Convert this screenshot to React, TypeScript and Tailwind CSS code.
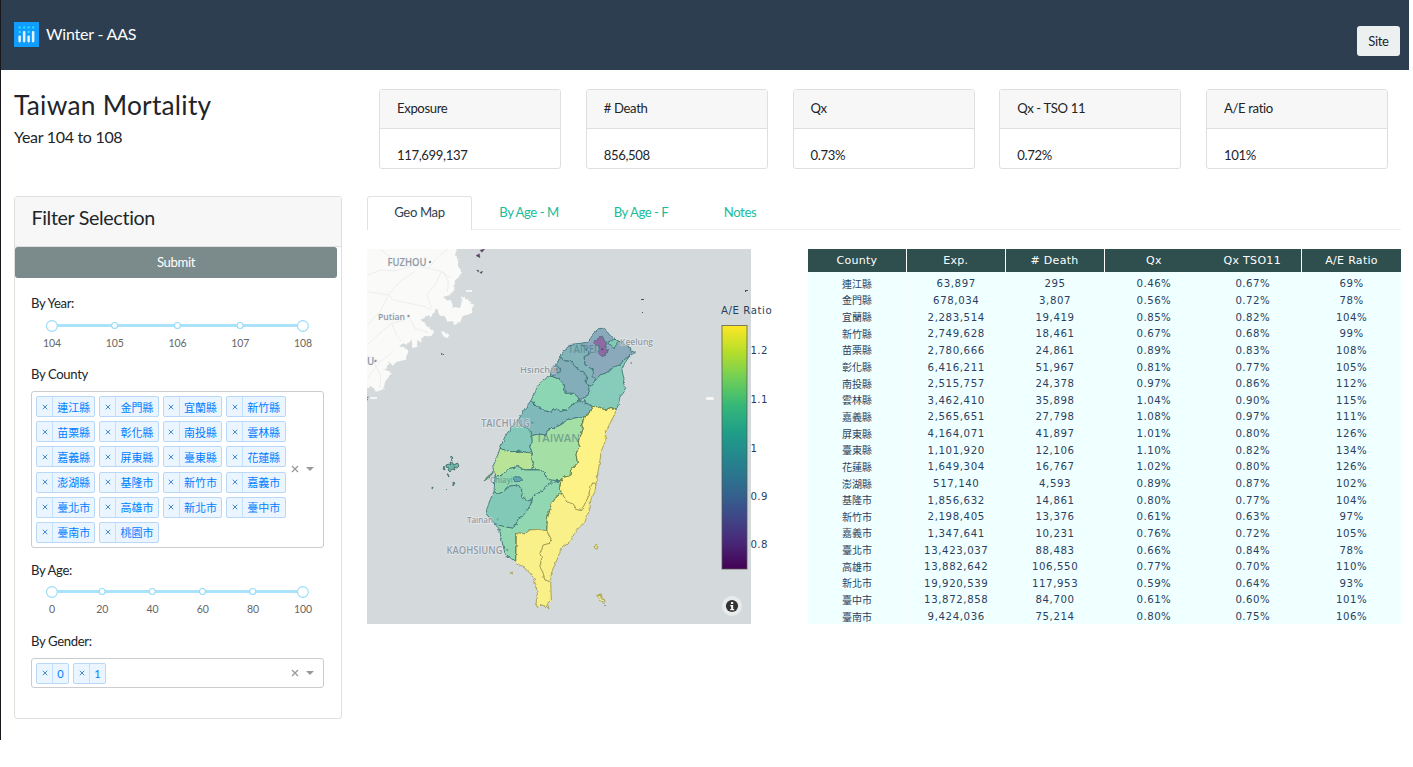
import React from "react";

const rows: string[][] = [
  ["連江縣", "63,897", "295", "0.46%", "0.67%", "69%"],
  ["金門縣", "678,034", "3,807", "0.56%", "0.72%", "78%"],
  ["宜蘭縣", "2,283,514", "19,419", "0.85%", "0.82%", "104%"],
  ["新竹縣", "2,749,628", "18,461", "0.67%", "0.68%", "99%"],
  ["苗栗縣", "2,780,666", "24,861", "0.89%", "0.83%", "108%"],
  ["彰化縣", "6,416,211", "51,967", "0.81%", "0.77%", "105%"],
  ["南投縣", "2,515,757", "24,378", "0.97%", "0.86%", "112%"],
  ["雲林縣", "3,462,410", "35,898", "1.04%", "0.90%", "115%"],
  ["嘉義縣", "2,565,651", "27,798", "1.08%", "0.97%", "111%"],
  ["屏東縣", "4,164,071", "41,897", "1.01%", "0.80%", "126%"],
  ["臺東縣", "1,101,920", "12,106", "1.10%", "0.82%", "134%"],
  ["花蓮縣", "1,649,304", "16,767", "1.02%", "0.80%", "126%"],
  ["澎湖縣", "517,140", "4,593", "0.89%", "0.87%", "102%"],
  ["基隆市", "1,856,632", "14,861", "0.80%", "0.77%", "104%"],
  ["新竹市", "2,198,405", "13,376", "0.61%", "0.63%", "97%"],
  ["嘉義市", "1,347,641", "10,231", "0.76%", "0.72%", "105%"],
  ["臺北市", "13,423,037", "88,483", "0.66%", "0.84%", "78%"],
  ["高雄市", "13,882,642", "106,550", "0.77%", "0.70%", "110%"],
  ["新北市", "19,920,539", "117,953", "0.59%", "0.64%", "93%"],
  ["臺中市", "13,872,858", "84,700", "0.61%", "0.60%", "101%"],
  ["臺南市", "9,424,036", "75,214", "0.80%", "0.75%", "106%"],
];

const headers = ["County", "Exp.", "# Death", "Qx", "Qx TSO11", "A/E Ratio"];

const counties = [
  "連江縣", "金門縣", "宜蘭縣", "新竹縣", "苗栗縣", "彰化縣", "南投縣", "雲林縣",
  "嘉義縣", "屏東縣", "臺東縣", "花蓮縣", "澎湖縣", "基隆市", "新竹市", "嘉義市",
  "臺北市", "高雄市", "新北市", "臺中市", "臺南市", "桃園市",
];

const stats = [
  ["Exposure", "117,699,137"],
  ["# Death", "856,508"],
  ["Qx", "0.73%"],
  ["Qx - TSO 11", "0.72%"],
  ["A/E ratio", "101%"],
];

function Logo() {
  return (
    <svg width="25" height="25" viewBox="0 0 25 25">
      <rect width="25" height="25" fill="#119dff" />
      <g fill="#e4f4ff">
        <rect x="4.4" y="13.4" width="2.5" height="7" rx="1.1" />
        <rect x="8.9" y="9" width="2.5" height="11.4" rx="1.1" />
        <rect x="13.4" y="13.4" width="2.5" height="7" rx="1.1" />
        <rect x="17.9" y="9" width="2.5" height="11.4" rx="1.1" />
      </g>
      <g fill="#25e0fd">
        <circle cx="5.7" cy="5.4" r="1.2" />
        <circle cx="10.2" cy="5.4" r="1.2" />
        <circle cx="14.7" cy="5.4" r="1.2" />
        <circle cx="19.2" cy="5.4" r="1.2" />
        <circle cx="5.7" cy="9.9" r="1.2" />
        <circle cx="14.7" cy="9.9" r="1.2" />
      </g>
    </svg>
  );
}

function Cross({ size }: { size: number }) {
  return (
    <svg width={size} height={size} viewBox="0 0 8 8" stroke="currentColor" strokeWidth="1.3">
      <path d="M1 1 L7 7 M7 1 L1 7" />
    </svg>
  );
}

function Tag({ label }: { label: string }) {
  return (
    <div className="flex h-[21px] rounded-[2px] border border-[#b9d8f8] bg-[#ebf5ff] text-[#007eff]">
      <span className="flex w-4 items-center justify-center border-r border-[#c2e0ff] text-[#3c86d2]">
        <Cross size={6} />
      </span>
      <span className="flex flex-1 items-center justify-center pt-px text-[11px] leading-none tracking-normal">{label}</span>
    </div>
  );
}

function SelectControls() {
  return (
    <div className="flex items-center gap-[7px] pb-px text-[#999]">
      <Cross size={8} />
      <svg width="8" height="4" viewBox="0 0 8 4" fill="#999">
        <path d="M0 0H8L4 4Z" />
      </svg>
    </div>
  );
}

function RangeSlider({ marks }: { marks: string[] }) {
  const step = 251 / (marks.length - 1);
  return (
    <svg width="292" height="36" viewBox="0 0 292 36" className="block">
      <rect x="21" y="6" width="251" height="3" fill="#abe2fb" />
      {marks.map((m, i) => {
        const end = i === 0 || i === marks.length - 1;
        const x = 20.9 + i * step;
        return (
          <g key={m}>
            <circle cx={x} cy={end ? 8 : 7.5} r={end ? 5.4 : 3} fill="#fff" stroke="#96dbfa" strokeWidth="1.1" />
            <text x={x + 0.2} y="29" fontSize="10.5" fill="#666" textAnchor="middle" letterSpacing="-0.1">
              {m}
            </text>
          </g>
        );
      })}
    </svg>
  );
}

const mainland =
  "M22 12H290L285 30L298 50L292 62L303 75L297 95L285 108L283 135L270 150L250 155L258 168L272 165L280 185L300 190L305 170L302 160L315 155L325 165L332 175L344 180L335 190L338 205L322 205L305 220L300 232L285 240L280 228L262 230L255 213L240 212L228 190L222 205L213 220L205 212L190 215L182 225L200 240L208 250L222 258L215 272L190 275L180 290L168 282L172 305L158 310L155 285L140 300L130 290L118 305L130 305L145 320L135 345L110 350L100 362L85 350L80 370L72 372L95 385L75 410L70 432L50 440L35 425L22 430Z";

const regions: { d: string; fill: string }[] = [
  { fill: "#8aaabb", d: "M330 100L350 97L362 85L372 68L385 56L400 55L412 66L425 82L440 92L455 96L462 105L475 108L480 122L496 127L480 137L462 150L450 165L430 172L420 182L405 190L390 195L380 208L372 208L365 198L370 180L345 165L342 140L357 132L352 120L345 112Z" },
  { fill: "#8f6ba2", d: "M370 98L380 88L397 78L402 90L410 100L408 118L418 122L405 128L405 138L395 139L385 125L388 110L375 105Z" },
  { fill: "#83ccb2", d: "M413 98L425 92L435 88L447 94L440 103L432 115L422 108Z" },
  { fill: "#83b4ba", d: "M330 100L305 103L285 118L270 140L283 152L302 155L310 165L325 178L340 185L350 200L347 210L358 232L368 222L377 210L365 198L370 180L345 165L342 140L357 132L352 120L345 112Z" },
  { fill: "#82adb9", d: "M270 140L262 160L250 172L240 197L255 203L270 210L283 225L285 250L310 250L325 262L328 271L345 268L355 250L358 232L347 210L350 200L340 185L325 178L310 165L302 155L283 152Z" },
  { fill: "#79a8b6", d: "M250 168L262 168L273 180L270 190L258 187L250 198L240 197L246 185Z" },
  { fill: "#87ccba", d: "M480 137L465 158L455 180L462 205L460 220L467 232L460 250L450 260L445 285L438 297L425 293L405 300L385 290L368 290L360 283L345 278L342 268L355 250L358 232L377 210L390 195L405 190L420 182L430 172L450 165L462 150Z" },
  { fill: "#8dd6b4", d: "M240 197L215 215L200 235L183 272L200 290L225 303L245 307L248 297L262 296L270 305L290 300L300 290L325 275L325 262L310 250L285 250L283 225L270 210L255 203Z" },
  { fill: "#80b9ba", d: "M183 272L165 295L145 330L160 350L175 355L185 377L205 372L228 375L232 362L260 350L285 335L310 325L345 318L362 305L368 290L345 278L328 271L300 290L290 300L270 305L262 296L248 297L245 307L225 303L200 290Z" },
  { fill: "#83c8b8", d: "M145 330L125 350L105 380L90 415L120 425L155 424L187 430L180 410L187 395L185 377L175 355L160 350Z" },
  { fill: "#a4dfa5", d: "M185 377L205 372L228 375L232 362L260 350L285 335L310 325L345 318L335 345L340 355L325 395L330 410L318 430L322 460L302 480L300 497L280 502L270 515L240 510L228 505L225 485L205 480L185 478L190 460L182 445L187 430L180 410L187 395Z" },
  { fill: "#b9e497", d: "M90 415L80 445L68 470L75 500L95 495L120 475L145 470L165 480L185 478L190 460L182 445L187 430L155 424L120 425Z" },
  { fill: "#92d6b0", d: "M75 500L72 545L85 552L100 545L120 528L145 525L155 540L155 560L175 572L187 570L190 558L215 545L240 520L270 512L240 510L228 505L225 485L205 480L165 480L145 470L120 475L95 495Z" },
  { fill: "#65a5af", d: "M128 505L135 500L150 501L155 507L149 515L137 515Z" },
  { fill: "#83c9b7", d: "M72 545L60 570L47 610L60 625L78 645L105 650L130 655L145 630L165 610L180 590L187 570L175 572L155 560L155 540L145 525L120 528L100 545L85 552Z" },
  { fill: "#91d7b1", d: "M78 645L90 665L95 690L105 730L137 757L140 700L140 668L165 672L180 660L205 658L230 662L232 625L245 580L262 558L277 550L268 540L272 512L240 520L215 545L190 558L187 570L180 590L165 610L145 630L130 655L105 650Z" },
  { fill: "#f9f08a", d: "M140 668L137 757L165 775L185 795L197 820L203 855L198 880L202 892L215 885L230 890L237 897L232 880L244 870L242 815L225 810L220 790L210 770L215 745L210 730L220 705L240 700L243 685L235 675L230 662L205 658L180 660L165 672Z" },
  { fill: "#f9f08a", d: "M277 550L262 558L245 580L232 625L230 662L243 685L240 700L220 705L210 730L215 745L210 770L220 790L225 810L242 815L245 785L265 740L275 715L305 690L315 665L345 635L360 595L362 570L375 545L378 522L368 518L360 535L355 560L340 590L335 602L320 598L310 582L290 575Z" },
  { fill: "#fcf286", d: "M368 290L385 290L405 300L425 293L441 300L425 330L405 370L410 385L395 420L385 480L378 522L368 518L360 535L355 560L340 590L335 602L320 598L310 582L290 575L277 550L268 540L272 515L280 502L300 497L302 480L322 460L318 430L330 410L325 395L340 355L335 345L345 318L362 305Z" },
];

const ticks: [string, number][] = [["1.2", 350], ["1.1", 398.5], ["1", 447.5], ["0.9", 496], ["0.8", 544]];

function GeoMap() {
  return (
    <svg width="420" height="375" viewBox="367 249 420 375" className="block shrink-0">
      <defs>
        <linearGradient id="scale" x1="0" y1="0" x2="0" y2="1">
          <stop offset="0" stopColor="#fde725" />
          <stop offset="0.11" stopColor="#b5de2b" />
          <stop offset="0.22" stopColor="#6ece58" />
          <stop offset="0.33" stopColor="#35b779" />
          <stop offset="0.44" stopColor="#1f9e89" />
          <stop offset="0.56" stopColor="#26828e" />
          <stop offset="0.67" stopColor="#31688e" />
          <stop offset="0.78" stopColor="#3e4989" />
          <stop offset="0.89" stopColor="#482878" />
          <stop offset="1" stopColor="#440154" />
        </linearGradient>
        <filter id="coast" x="-5%" y="-5%" width="110%" height="110%">
          <feTurbulence type="fractalNoise" baseFrequency="0.08" numOctaves="2" seed="4" />
          <feDisplacementMap in="SourceGraphic" scale="10" xChannelSelector="R" yChannelSelector="G" />
        </filter>
        <clipPath id="frame">
          <rect x="367" y="249" width="384" height="375" />
        </clipPath>
      </defs>
      <g clipPath="url(#frame)">
        <rect x="367" y="249" width="384" height="375" fill="#d4dadc" />
        <g transform="translate(360 245) scale(.33333)">
          <g filter="url(#coast)">
            <path d={"M0 -10H290V12H22V430H0Z" + mainland} fill="#fafaf8" />
            <path d="M243 262L252 258L268 270L262 280L250 274Z" fill="#fafaf8" />
          </g>
          <path d="M22 92L60 75L105 78L160 62L205 70L245 80L270 98M105 78L95 40L60 12M205 70L230 40L262 12M22 140L85 150L120 110L165 80M85 150L100 165L195 185L215 195M85 150L60 200L22 240M215 190L200 150L225 120L245 80M135 225L95 235L65 260L22 300M95 235L110 270L125 290M22 400L60 350L100 320M40 350L62 390L60 430M250 80L265 110L262 140M22 330L60 350M150 220L165 250L205 262" fill="none" stroke="#e9ebec" strokeWidth="2.5" />
          <path d="M348 32L358 26L360 38ZM360 16L374 12L366 22ZM350 76L356 76L356 82ZM360 82L368 79L364 86Z" fill="#5b4168" stroke="#463651" strokeWidth="1" />
          <path d="M243 325h4v4h-4ZM249 327h3v3h-3ZM22 455h3v4h-3ZM22 462h2v4h-2Z" fill="#4c5561" />
        </g>
        <g transform="translate(470 310) scale(.33333)">
          <g filter="url(#coast)" strokeWidth="2.6" strokeLinejoin="round">
            {regions.map((r, i) => (
              <path key={i} d={r.d} fill={r.fill} stroke={i > 15 ? "#a09a4d" : "#3d7476"} />
            ))}
            <path d="M42 513L52 500L68 487L66 494L50 508Z" fill="#73a37f" stroke="#4c7a62" />
            <path d="M137 668L137 757M230 662L232 625L245 580L262 558L277 550L268 540L272 515L280 502L300 497L302 480L322 460L318 430L330 410L325 395L340 355L335 345L345 318L362 305L368 290L385 290L405 300L425 293L441 300" fill="none" stroke="#5f7d46" />
            <path d="M372 710L380 706L384 714L378 718ZM120 790L127 786L126 794ZM380 855L394 852L397 866L405 870L400 877L388 868Z" fill="#f5eb82" stroke="#9b9446" />
            <path d="M108 741l5 -3l3 5l-5 3Z" fill="#83c9b7" stroke="#3d7476" />
          </g>
          <path d="M403 885h4v2h-4ZM482 157h3v4h-3ZM516 6h3v3h-3Z" fill="#566270" />
          <circle cx="397" cy="118" r="3.5" fill="#5b4c74" />
          <circle cx="187" cy="338" r="3.5" fill="#6098a0" />
          <circle cx="83" cy="628" r="3.5" fill="#6eafa2" />
          <circle cx="112" cy="720" r="3.5" fill="#69a78b" />
          <circle cx="258" cy="178" r="4" fill="#55798a" />
        </g>
        <g fill="#6fb6a6" stroke="#31565b" strokeWidth=".7">
          <path d="M450 457l2 -.5l1 1.5l-2 2l1.500 1M446 465l3 -1l2 1l-1 -3l3 1l.5 2l4 -2l1.500 3l-2 2l-3 -1l1 3l-3 -1l-2 3l-2 -2l1 -2l-3 -1ZM444 466l-1 3l2 1ZM447 474l2 3l-1 -3ZM453 482l2 1l-2 3ZM433 487l-1.500 1l1 .8ZM446 489l1 1" />
        </g>
        <path d="M641 299h3v1h-3ZM745 290h3v1h-2v1h-1ZM642 312h1v1h-1Z" fill="#3e5661" />
        <rect x="706" y="397" width="8" height="3" rx="1.5" fill="#f6f7f5" />
        <path d="M466 290h6v2h-6ZM370 397h7v2h-7Z" fill="#f3f5f4" />
        <g
          fontFamily="'Open Sans', 'Noto Sans', sans-serif"
          fontWeight="600"
          fill="#8f9aa6"
          stroke="#f1f3f4"
          strokeWidth="1.4"
          paintOrder="stroke"
          strokeOpacity=".6"
          letterSpacing="0"
        >
          <text x="387.5" y="266" fontSize="9.8" textLength="39" lengthAdjust="spacingAndGlyphs">FUZHOU</text>
          <text x="378" y="319.5" fontSize="9" textLength="27" lengthAdjust="spacingAndGlyphs">Putian</text>
          <text x="367" y="364.5" fontSize="9.8">U</text>
          <text x="446.5" y="553.7" fontSize="9.8" textLength="56" lengthAdjust="spacingAndGlyphs">KAOHSIUNG</text>
          <text x="481" y="426.5" fontSize="9.8" textLength="49" lengthAdjust="spacingAndGlyphs">TAICHUNG</text>
          <text x="520" y="372.5" fontSize="9" textLength="36" lengthAdjust="spacingAndGlyphs">Hsinchu</text>
          <text x="620" y="345.3" fontSize="9" textLength="33" lengthAdjust="spacingAndGlyphs">Keelung</text>
          <text x="467" y="522.7" fontSize="9" textLength="26" lengthAdjust="spacingAndGlyphs">Tainan</text>
        </g>
        <g fontFamily="'Open Sans', 'Noto Sans', sans-serif" fontWeight="600" fill="#45717e" fillOpacity=".55" letterSpacing="0">
          <text x="568" y="353.2" fontSize="10" textLength="29" lengthAdjust="spacingAndGlyphs">TAIPEI</text>
          <text x="490" y="482.5" fontSize="9" textLength="23" lengthAdjust="spacingAndGlyphs">Chiayi</text>
          <text x="536" y="442.3" fontSize="11.5" textLength="44" lengthAdjust="spacingAndGlyphs">TAIWAN</text>
        </g>
        <g fill="#8a949f">
          <circle cx="430" cy="262" r="1.2" />
          <circle cx="408.5" cy="316" r="1.2" />
          <circle cx="375.5" cy="361" r="1.2" />
        </g>
        <circle cx="732" cy="606" r="10" fill="#e8ebec" />
        <circle cx="732" cy="606" r="6.1" fill="#333" />
        <path d="M731 602h2.2v2h-2.2ZM730.2 605h3v4h1v1.2h-4v-1.2h.9v-2.8h-.9Z" fill="#f4f4f4" />
      </g>
      <rect x="722" y="325.5" width="25" height="243.5" fill="url(#scale)" stroke="#555" strokeOpacity=".75" strokeWidth="1" />
      <g fontFamily="'DejaVu Sans', Verdana, sans-serif" fontSize="10.2" fill="#2a3f5f" letterSpacing="0.35">
        <text x="721" y="314" textLength="51">A/E Ratio</text>
        {ticks.map(([t, y]) => (
          <text key={t} x="750.5" y={y + 4}>
            {t}
          </text>
        ))}
      </g>
    </svg>
  );
}

function DataTable() {
  return (
    <div className="ml-[21px] w-[593px] shrink-0 font-['DejaVu_Sans','Noto_Sans_CJK_TC',sans-serif] tracking-normal">
      <div className="grid h-[23px] grid-cols-6 bg-[#2f4f4f] text-[11px] text-white">
        {headers.map((h, i) => (
          <div
            key={h}
            className={
              i === 3 || i === 5
                ? "flex items-center justify-center tracking-[0.3px]"
                : "flex items-center justify-center border-r border-white tracking-[0.3px]"
            }
          >
            {h}
          </div>
        ))}
      </div>
      <div className="h-[352px] overflow-hidden bg-[#f0ffff] pt-[4px] text-[10.2px] leading-[16px] text-[#2a3f5f]">
        {rows.map((r) => (
          <div key={r[0]} className="grid h-[16.65px] grid-cols-6">
            {r.map((c, i) => (
              <div
                key={i}
                className={
                  i === 0
                    ? "flex h-[16.65px] items-center justify-center border-r border-[#fafffe] pt-px text-[10px]"
                    : i < 3
                      ? "flex h-[16.65px] items-center justify-center tracking-[0.6px]"
                      : "flex h-[16.65px] items-center justify-center tracking-[0.45px]"
                }
              >
                {c}
              </div>
            ))}
          </div>
        ))}
      </div>
    </div>
  );
}

export default function App() {
  return (
    <div className="h-[767px] w-[1413px] overflow-hidden bg-white font-[Lato,'Noto_Sans_CJK_TC',sans-serif] text-[13.1px] leading-[20px] tracking-[-0.35px] text-[#212529]">
      <div className="h-[740px] w-[1409px] border-l border-[#16181d]">
        <header className="flex h-[70px] items-start justify-between bg-[#2c3e50] pl-[13px] pr-[9px]">
          <div className="flex items-start gap-[7px] pt-[22px]">
            <Logo />
            <span className="pt-[2px] text-[16px] tracking-[-0.2px] text-white">Winter - AAS</span>
          </div>
          <button className="mt-[26px] h-[30px] w-[43px] rounded-[3px] bg-[#ecf0f1] text-[13.1px]">Site</button>
        </header>

        <div className="flex h-[126px] pl-[13px] pt-[19px]">
          <div className="w-[365px]">
            <h1 className="text-[26.3px] leading-[32px] tracking-[0.25px]">Taiwan Mortality</h1>
            <p className="pt-[6px] text-[16px] leading-[20px] tracking-[-0.3px]">Year 104 to 108</p>
          </div>
          <div className="flex gap-[24.75px]">
            {stats.map(([k, v]) => (
              <div key={k} className="h-[80px] w-[182px] rounded-[3px] border border-[#dfdfdf]">
                <div className="flex h-[39px] items-center border-b border-[#dfdfdf] bg-[#f7f7f7] pb-[2px] pl-[17px]">{k}</div>
                <div className="pl-[17px] pt-[16px]">{v}</div>
              </div>
            ))}
          </div>
        </div>

        <div className="flex pl-[13px]">
          <section className="h-[523px] w-[328px] shrink-0 rounded-[3px] border border-[#dfdfdf]">
            <div className="h-[50px] border-b border-[#dfdfdf] bg-[#f7f7f7] pl-[16.5px] pt-[9px] text-[19.7px] leading-[24px]">
              Filter Selection
            </div>
            <button className="block h-[31px] w-[322px] rounded-[3px] bg-[#7b8a8b] pb-px text-white">Submit</button>
            <div className="pl-[16px] pt-[15px]">
              <div className="h-[25px]">By Year:</div>
              <RangeSlider marks={["104", "105", "106", "107", "108"]} />
              <div className="h-[37px] pt-[10px]">By County</div>
              <div className="flex h-[157px] w-[293px] items-center rounded-[3px] border border-[#ccc]">
                <div className="grid h-full w-[259px] grid-cols-[59.4px_59.4px_59.4px_59.4px] content-start gap-x-[4px] gap-y-[4.2px] pl-[4px] pt-[4px]">
                  {counties.map((c) => (
                    <Tag key={c} label={c} />
                  ))}
                </div>
                <SelectControls />
              </div>
              <div className="h-[36px] pt-[12px]">By Age:</div>
              <RangeSlider marks={["0", "20", "40", "60", "80", "100"]} />
              <div className="h-[38px] pt-[11px]">By Gender:</div>
              <div className="flex h-[30px] w-[293px] items-center rounded-[3px] border border-[#ccc]">
                <div className="flex w-[259px] gap-[4px] pl-[4px]">
                  <div className="w-[33px]">
                    <Tag label="0" />
                  </div>
                  <div className="w-[33px]">
                    <Tag label="1" />
                  </div>
                </div>
                <SelectControls />
              </div>
            </div>
          </section>

          <section className="ml-[25px] w-[1034px]">
            <nav className="flex h-[34px] border-b border-[#ecf0f1] text-[#18bc9c]">
              <div className="flex h-[34px] w-[105px] items-center justify-center rounded-t-[3px] border border-b-0 border-[#dfe3e5] bg-white pb-[3px] text-[#2c3e50]">
                Geo Map
              </div>
              <div className="flex w-[114px] items-center justify-center pb-[2px] tracking-[-0.45px]">By Age - M</div>
              <div className="flex w-[110px] items-center justify-center pb-[2px] tracking-[-0.45px]">By Age - F</div>
              <div className="flex w-[88px] items-center justify-center pb-[2px]">Notes</div>
            </nav>
            <div className="mt-[19px] flex">
              <GeoMap />
              <DataTable />
            </div>
          </section>
        </div>
      </div>
    </div>
  );
}
